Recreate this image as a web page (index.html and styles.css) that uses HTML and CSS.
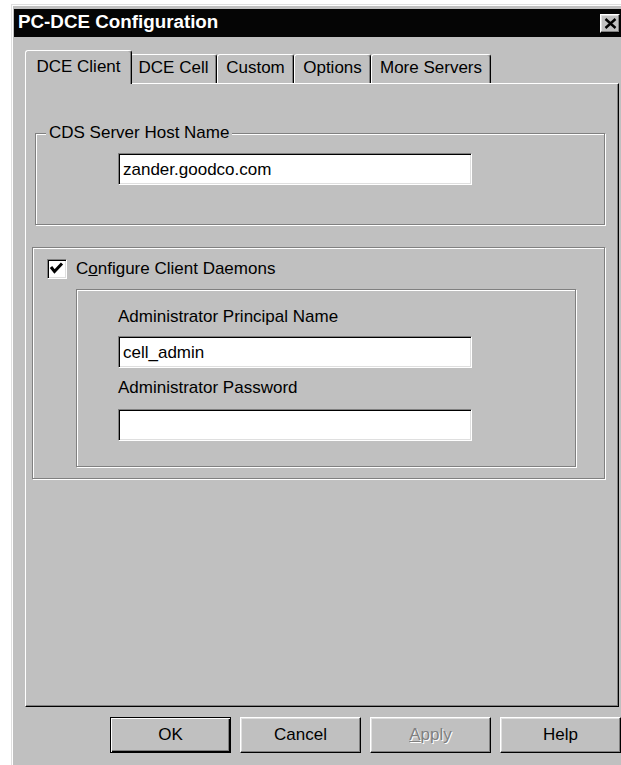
FILE: index.html
```html
<!DOCTYPE html>
<html lang="en">
<head>
<meta charset="utf-8">
<title>PC-DCE Configuration</title>
<link rel="stylesheet" href="styles.css">
</head>
<body>
<div class="window">
  <div class="titlebar">
    <span class="title">PC-DCE Configuration</span>
    <button class="close" type="button" aria-label="Close">
      <svg width="13" height="11" viewBox="0 0 13 11"><path d="M1.5 1 L11.5 10 M11.5 1 L1.5 10" stroke="#000" stroke-width="2.4" fill="none"/></svg>
    </button>
  </div>

  <div class="tabs">
    <div class="tab active w-client">DCE Client</div>
    <div class="tab w-cell">DCE Cell</div>
    <div class="tab w-custom">Custom</div>
    <div class="tab w-options">Options</div>
    <div class="tab w-servers">More Servers</div>
  </div>

  <div class="panel">
    <div class="group host">
      <span class="legend">CDS Server Host Name</span>
      <div class="field">zander.goodco.com</div>
    </div>

    <div class="group daemons">
      <div class="check-row">
        <span class="checkbox">
          <svg width="16" height="16" viewBox="0 0 16 16"><polyline points="2,6 5.5,10.5 13,2.5" stroke="#000" stroke-width="3" fill="none"/></svg>
        </span>
        <span>C<u>o</u>nfigure Client Daemons</span>
      </div>
      <div class="group admin">
        <div class="label">Administrator Principal Name</div>
        <div class="field f-name">cell_admin</div>
        <div class="label l-pass">Administrator Password</div>
        <div class="field f-pass"></div>
      </div>
    </div>
  </div>

  <div class="buttons">
    <button class="btn default" type="button">OK</button>
    <button class="btn" type="button">Cancel</button>
    <button class="btn disabled" type="button"><u>A</u>pply</button>
    <button class="btn" type="button">Help</button>
  </div>
</div>
</body>
</html>
```

FILE: styles.css
```css
* {
  box-sizing: border-box;
}

html,
body {
  margin: 0;
  padding: 0;
  background: #fff;
  overflow: hidden;
}

body {
  width: 621px;
  height: 765px;
  font: 17px/20px "Liberation Sans", Arial, sans-serif;
  color: #000;
}

/* Dialog frame – runs off the right edge of the screen */
.window {
  margin: 4px 0 0 11px;
  width: 614px;
  height: 780px;
  background: #c0c0c0;
  border-top: 1px solid #dfdfdf;
  border-left: 1px solid #dfdfdf;
  box-shadow: inset 1px 1px #fff;
  padding: 4px 0 0 2px;
}

.titlebar {
  display: flex;
  height: 28px;
  background: #050505;
  color: #fff;
  padding: 0 5px 0 4px;
}

.title {
  font: bold 18.8px/26px "Liberation Sans", Arial, sans-serif;
  white-space: nowrap;
}

.close {
  margin: 5px 0 0 auto;
  width: 20px;
  height: 19px;
  padding: 0;
  background: #c0c0c0;
  border: 1px solid;
  border-color: #fff #000 #000 #fff;
  box-shadow: inset -1px -1px #808080, inset 1px 1px #dfdfdf;
  display: flex;
  align-items: center;
  justify-content: center;
}

/* Property sheet tabs */
.tabs {
  display: flex;
  align-items: flex-end;
  height: 33px;
  margin-top: 13px;
  padding-left: 11px;
}

.tab {
  height: 29px;
  padding-top: 3px;
  text-align: center;
  white-space: nowrap;
  background: #c0c0c0;
  border: 1px solid;
  border-bottom: none;
  border-color: #fff #000 transparent #fff;
  border-radius: 3px 3px 0 0;
  box-shadow: inset -1px 0 #808080;
  font: 17px/20px "Liberation Sans", Arial, sans-serif;
}

.tab.active {
  position: relative;
  z-index: 2;
  height: 34px;
  margin-bottom: -1px;
  padding-top: 6px;
}

.w-client { width: 107px; }
.w-cell { width: 87px; margin-left: -2px; }
.w-custom { width: 77px; }
.w-options { width: 77px; }
.w-servers { width: 120px; }

.panel {
  margin-left: 11px;
  width: 594px;
  height: 624px;
  border: 1px solid;
  border-color: #fff #000 #000 #fff;
  box-shadow: inset -1px -1px #808080;
  padding: 49px 0 0 9px;
}

/* Etched group boxes */
.group {
  position: relative;
  border: 1px solid #808080;
  box-shadow: inset 1px 1px #fff, 1px 1px #fff;
}

.legend {
  position: absolute;
  left: 10px;
  top: -11px;
  padding: 0 3px;
  background: #c0c0c0;
}

.host {
  width: 570px;
  height: 92px;
  padding: 19px 0 0 82px;
}

.field {
  width: 354px;
  height: 32px;
  padding: 1px 4px 0;
  line-height: 29px;
  background: #fff;
  border: 1px solid;
  border-color: #808080 #fff #fff #808080;
  box-shadow: inset 1px 1px #000, inset -1px -1px #dfdfdf;
}

.daemons {
  margin: 22px 0 0 -3px;
  width: 573px;
  height: 232px;
  padding: 11px 0 0 14px;
}

.check-row {
  display: flex;
  align-items: center;
  gap: 9px;
  height: 20px;
}

.checkbox {
  width: 20px;
  height: 20px;
  padding: 1px;
  background: #fff;
  border: 1px solid;
  border-color: #808080 #fff #fff #808080;
  box-shadow: inset 1px 1px #000, inset -1px -1px #dfdfdf;
  display: flex;
}

.admin {
  margin: 10px 0 0 29px;
  width: 500px;
  height: 178px;
  padding: 17px 0 0 41px;
}

.f-name {
  margin-top: 9px;
}

.l-pass {
  margin-top: 10px;
}

.f-pass {
  margin-top: 11px;
}

/* Command buttons */
.buttons {
  display: flex;
  gap: 9px;
  margin-top: 10px;
  padding-left: 96px;
}

.btn {
  width: 121px;
  height: 36px;
  padding: 0;
  font: 17px/20px "Liberation Sans", Arial, sans-serif;
  color: #000;
  background: #c0c0c0;
  border: 1px solid;
  border-color: #fff #000 #000 #fff;
  box-shadow: inset -1px -1px #808080, inset 1px 1px #dfdfdf;
}

.btn.default {
  border-color: #000;
  box-shadow: inset 1px 1px #fff, inset -1px -1px #000, inset -2px -2px #808080;
}

.btn.disabled {
  color: #808080;
  text-shadow: 1px 1px #fff;
}
```
